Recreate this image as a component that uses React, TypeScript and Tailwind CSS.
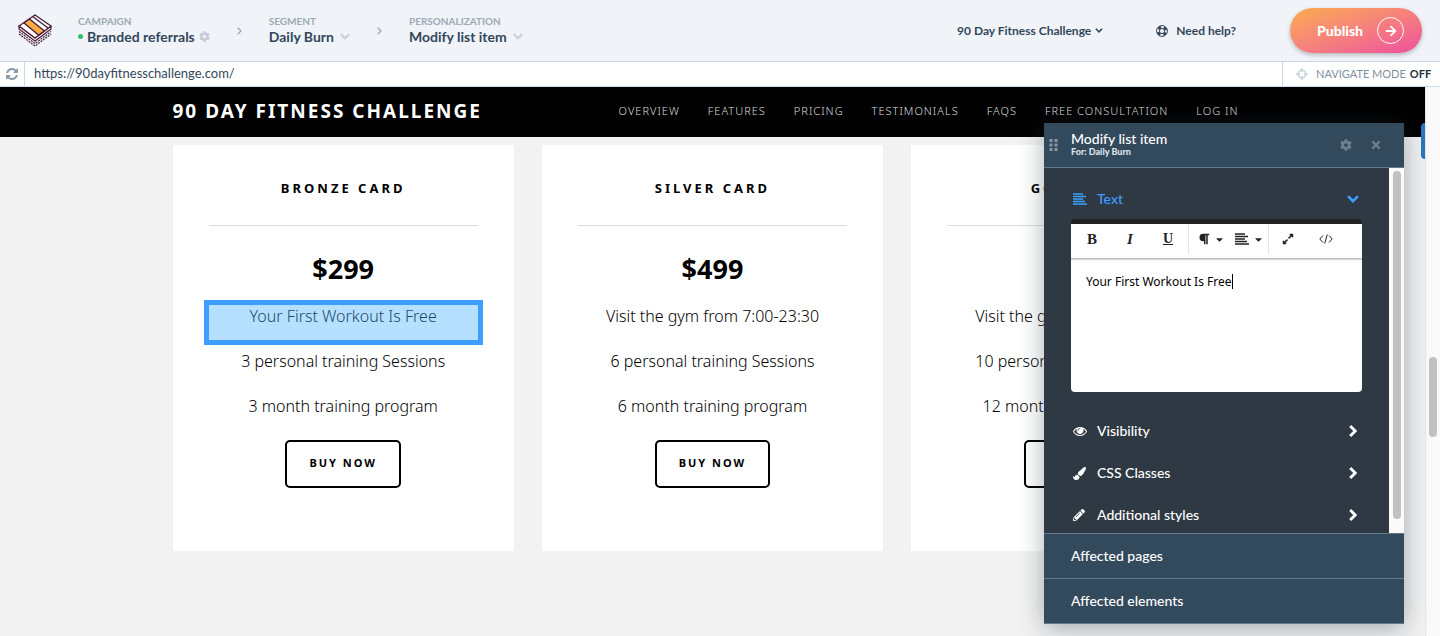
import { FaArrowRight, FaCaretDown, FaCog, FaExpandAlt, FaParagraph, FaPaintBrush, FaPencilAlt, FaTimes } from "react-icons/fa";
import { useState, type ReactNode } from "react";

interface Plan {
  name: string;
  price: string;
  features: string[];
}

const NAV_LINKS = ["Overview", "Features", "Pricing", "Testimonials", "FAQs", "Free consultation", "Log in"];

const PLANS: Plan[] = [
  { name: "Bronze card", price: "$299", features: ["3 personal training Sessions", "3 month training program"] },
  {
    name: "Silver card",
    price: "$499",
    features: ["Visit the gym from 7:00-23:30", "6 personal training Sessions", "6 month training program"],
  },
  {
    name: "Gold card",
    price: "$699",
    features: ["Visit the gym from 7:00-23:30", "10 personal training Sessions", "12 month training program"],
  },
];

function Logo() {
  return (
    <svg viewBox="0 0 34 34" className="size-[34px]" fill="none" stroke="#4a1f3a" strokeLinejoin="round">
      <path d="M1 20 17 32 33 20" strokeWidth="1.2" strokeDasharray="2 1" />
      <path d="M1 17.500 17 29.500 33 17.500" strokeWidth="1.2" strokeDasharray="2 1" />
      <path d="M1 12v3l16 12 16-12v-3L17 24z" fill="#fff" strokeWidth="1.2" />
      <path d="M17 1 33 12 17 24 1 12z" fill="#fff" strokeWidth="1.4" />
      <path d="M15 2.800 30 14" strokeWidth="1.4" />
      <path d="M11.500 5 26.500 17 20.500 21 6 9z" fill="#fbab3f" strokeWidth="1.4" />
    </svg>
  );
}

function RefreshIcon() {
  return (
    <svg viewBox="0 128 1536 1536" className="size-3" fill="currentColor">
      <path d="M1511 1056q0 5-1 7-64 268-268 434.500t-478 166.500q-146 0-282.500-55t-243.500-157l-129 129q-19 19-45 19t-45-19-19-45v-448q0-26 19-45t45-19h448q26 0 45 19t19 45-19 45l-137 137q71 66 161 102t187 36q134 0 250-65t186-179q11-17 53-117 8-23 30-23h192q13 0 22.500 9.500t9.500 22.500zm25-800v448q0 26-19 45t-45 19h-448q-26 0-45-19t-19-45 19-45l138-138q-148-137-349-137-134 0-250 65t-186 179q-11 17-53 117-8 23-30 23h-199q-13 0-22.500-9.500t-9.500-22.500v-7q65-268 270-434.500t480-166.500q146 0 284 55.500t245 156.500l130-129q19-19 45-19t45 19 19 45z" />
    </svg>
  );
}

function EyeIcon() {
  return (
    <svg viewBox="0 0 1792 1792" className="size-[14px]" fill="currentColor">
      <path d="M1664 960q-152-236-381-353 61 104 61 225 0 185-131.500 316.500t-316.500 131.500-316.500-131.500-131.500-316.500q0-121 61-225-229 117-381 353 133 205 333.500 326.500t434.500 121.500 434.500-121.500 333.500-326.500zm-720-384q0-20-14-34t-34-14q-125 0-214.500 89.500t-89.500 214.500q0 20 14 34t34 14 34-14 14-34q0-86 61-147t147-61q20 0 34-14t14-34zm848 384q0 34-20 69-140 230-376.500 368.500t-499.500 138.500-499.500-139-376.500-368q-20-35-20-69t20-69q140-229 376.500-368t499.500-139 499.500 139 376.500 368q20 35 20 69z" />
    </svg>
  );
}

function LifeRingIcon() {
  return (
    <svg viewBox="0 0 12 12" className="size-3" fill="none" stroke="#33475b">
      <circle cx="6" cy="6" r="5.400" />
      <circle cx="6" cy="6" r="2.600" />
      <circle cx="6" cy="6" r="4" strokeWidth="2.800" strokeDasharray="3.142 3.142" strokeDashoffset="-1.571" />
    </svg>
  );
}

function TargetIcon() {
  return (
    <svg viewBox="0 0 12 12" className="size-3" fill="none" stroke="#c3d3de" strokeWidth="1.500">
      <circle cx="6" cy="6" r="3.700" />
      <path d="M6 0v4M6 8v4M0 6h4M8 6h4" />
    </svg>
  );
}

function LinesIcon() {
  return (
    <svg viewBox="0 0 14 12" className="h-3 w-[14px]" stroke="currentColor" strokeWidth="1.600">
      <path d="M0 1h10M0 3.500h13M0 6h10M0 8.500h12M0 11h14" />
    </svg>
  );
}

function CodeIcon() {
  return (
    <svg viewBox="0 0 14 10" className="h-[10px] w-[14px]" fill="none" stroke="currentColor">
      <path d="M4 1.500.8 5 4 8.500M10 1.500 13.200 5 10 8.500M8.300 0.500 5.700 9.500" />
    </svg>
  );
}

function ChevronDown({ className }: { className?: string }) {
  return (
    <svg viewBox="0 0 12 8" className={className} fill="none" stroke="currentColor" strokeWidth="2.600">
      <path d="M1 1.200 6 6.200 11 1.200" />
    </svg>
  );
}

function ChevronRight({ className }: { className?: string }) {
  return (
    <svg viewBox="0 0 8 12" className={className} fill="none" stroke="currentColor" strokeWidth="2.800">
      <path d="M1.200 1 6.200 6 1.200 11" />
    </svg>
  );
}

function CrumbArrow() {
  return (
    <svg viewBox="0 0 5 8" className="mx-[27px] h-2 w-[5px]" fill="none" stroke="#9daab6" strokeWidth="1.300">
      <path d="M.7.700 4 4 .7 7.300" />
    </svg>
  );
}

function Crumb({ label, children }: { label: string; children: ReactNode }) {
  return (
    <div>
      <div className="text-[10px] leading-3 font-bold text-[#9daab6] uppercase">{label}</div>
      <button className="flex items-center gap-1 text-sm leading-5 font-bold text-[#33475b]">{children}</button>
    </div>
  );
}

function PlanCard({ plan, highlight }: { plan: Plan; highlight?: string }) {
  return (
    <article className="h-[406px] bg-white px-9 text-center text-black">
      <h2 className="border-b border-[#ddd] pt-[33px] pb-[27px] text-[13px] leading-5 font-bold tracking-[3px] uppercase">
        {plan.name}
      </h2>
      <p className="pt-[27px] text-[27px] leading-8 font-bold">{plan.price}</p>
      <ul className="mt-[15px] text-base leading-[33px] font-light">
        {highlight && (
          <li className="-mx-[5px] h-[45px] border-[5px] border-[#3d9eff] bg-[#b5e0ff] leading-[23px] text-[#21486b]">
            {highlight}
          </li>
        )}
        {plan.features.map((feature) => (
          <li key={feature} className="h-[45px]">
            {feature}
          </li>
        ))}
      </ul>
      <button className="mt-[5px] h-12 rounded-[5px] border-2 border-black px-[22px] pb-[2px] text-[11px] font-bold tracking-[2px] uppercase">
        Buy now
      </button>
    </article>
  );
}

function Section({ icon, title }: { icon: ReactNode; title: string }) {
  return (
    <button className="flex w-full items-center text-sm leading-5 font-medium text-white">
      <span className="flex w-[26px] pl-[2px]">{icon}</span>
      {title}
      <ChevronRight className="mr-[5px] ml-auto h-3 w-2" />
    </button>
  );
}

function ToolbarButton({ label, children }: { label: string; children: ReactNode }) {
  return (
    <button aria-label={label} className="flex h-[30px] w-[38px] items-center justify-center">
      {children}
    </button>
  );
}

function EditorPanel({ text, onTextChange }: { text: string; onTextChange: (value: string) => void }) {
  return (
    <aside className="absolute top-9 right-9 w-[360px] bg-[#33495c] font-[Lato,sans-serif] text-white shadow-[0_4px_24px_rgba(40,60,70,0.4)]">
      <header className="flex h-[45px] items-center border-b border-[#64798a] pr-[22px] pl-[5px]">
        <svg viewBox="0 0 8 12" className="mr-[13px] h-3 w-[9px]" fill="#8a98a4">
          <path d="M0 0h3v3H0zM5 0h3v3H5zM0 4.500h3v3H0zM5 4.500h3v3H5zM0 9h3v3H0zM5 9h3v3H5z" />
        </svg>
        <div className="flex-1 pb-[2px]">
          <h3 className="text-sm leading-4 font-medium">Modify list item</h3>
          <p className="text-[9px] leading-[10px] font-black text-[#dbe4ec]">For: Daily Burn</p>
        </div>
        <button aria-label="Settings" className="mr-[18px] text-[#6f808d]">
          <FaCog size={12} />
        </button>
        <button aria-label="Close" className="text-[#6f808d]">
          <FaTimes size={12} />
        </button>
      </header>

      <div className="flex h-[365px] bg-[#2f3943]">
        <div className="flex-1 overflow-hidden pt-[21px] pr-[27px] pl-[27px]">
          <button className="flex w-full items-center text-sm leading-5 font-medium text-[#3d9eff]">
            <span className="flex w-[26px] pl-[2px]">
              <LinesIcon />
            </span>
            Text
            <ChevronDown className="mr-[3px] ml-auto h-2 w-3" />
          </button>
          <div className="mt-[10px] rounded-sm border-t-[5px] border-[#222] bg-white text-[#222]">
            <div className="flex h-[35px] items-start border-b border-[#bbb] pl-[2px] shadow-[0_1px_1px_rgba(0,0,0,0.15)]">
              <ToolbarButton label="Bold">
                <span className="font-['Liberation_Serif',serif] text-[15px] font-bold">B</span>
              </ToolbarButton>
              <ToolbarButton label="Italic">
                <span className="font-['Liberation_Serif',serif] text-[15px] font-bold italic">I</span>
              </ToolbarButton>
              <ToolbarButton label="Underline">
                <span className="font-['Liberation_Serif',serif] text-sm font-bold underline">U</span>
              </ToolbarButton>
              <div className="ml-[1px] flex border-x border-[#e5e5e5] pl-[3px]">
                <ToolbarButton label="Paragraph format">
                  <FaParagraph size={12} className="mr-1" />
                  <FaCaretDown size={11} />
                </ToolbarButton>
                <ToolbarButton label="Align">
                  <span className="mr-1">
                    <LinesIcon />
                  </span>
                  <FaCaretDown size={11} />
                </ToolbarButton>
              </div>
              <ToolbarButton label="Full screen">
                <FaExpandAlt size={12} />
              </ToolbarButton>
              <ToolbarButton label="Code view">
                <CodeIcon />
              </ToolbarButton>
            </div>
            <div className="flex h-[133px] items-start px-[15px] py-[13px]">
              <textarea
                aria-label="Text"
                rows={1}
                value={text}
                onChange={(e) => onTextChange(e.target.value)}
                className="block field-sizing-content max-w-full resize-none overflow-hidden font-['Noto_Sans',sans-serif] text-xs leading-5 text-black caret-transparent outline-none"
              />
              <span className="mt-[2px] h-[15px] w-px bg-black" />
            </div>
          </div>
          <div className="mt-[29px] space-y-[22px]">
            <Section icon={<EyeIcon />} title="Visibility" />
            <Section icon={<FaPaintBrush size={13} />} title="CSS Classes" />
            <Section icon={<FaPencilAlt size={12} />} title="Additional styles" />
          </div>
        </div>
        <div className="w-[15px] bg-[#fafafa] pt-[3px] pl-1">
          <div className="h-[348px] w-2 rounded-full bg-[#c1c1c1]" />
        </div>
      </div>

      <button className="block h-[46px] w-full border-y border-[#64798a] pl-[27px] text-left text-sm font-medium">
        Affected pages
      </button>
      <button className="block h-[45px] w-full border-b border-[#64798a] pl-[27px] text-left text-sm font-medium">
        Affected elements
      </button>
    </aside>
  );
}

export default function App() {
  const [text, setText] = useState("Your First Workout Is Free");

  return (
    <div className="flex h-screen flex-col overflow-hidden bg-[#f2f2f2] font-[Lato,sans-serif]">
      {/* Top bar */}
      <header className="flex h-[62px] shrink-0 items-center border-b border-[#c9d8e2] bg-[#f0f3f8] px-[18px]">
        <Logo />
        <nav className="ml-[26px] flex items-center">
          <Crumb label="Campaign">
            <span className="size-[5px] rounded-full bg-[#2fc36d]" />
            Branded referrals
            <FaCog size={11} className="text-[#c5ccd4]" />
          </Crumb>
          <CrumbArrow />
          <Crumb label="Segment">
            Daily Burn
            <ChevronDown className="ml-[2px] h-[7px] w-[10px] text-[#c9cfd6]" />
          </Crumb>
          <CrumbArrow />
          <Crumb label="Personalization">
            Modify list item
            <ChevronDown className="ml-[2px] h-[7px] w-[10px] text-[#c9cfd6]" />
          </Crumb>
        </nav>
        <button className="ml-auto flex items-center gap-1 text-xs font-bold text-[#33475b]">
          90 Day Fitness Challenge
          <ChevronDown className="h-[5px] w-2" />
        </button>
        <a href="#help" className="ml-[53px] flex items-center gap-2 text-xs font-bold text-[#33475b]">
          <LifeRingIcon />
          Need help?
        </a>
        <button className="ml-[54px] flex h-[45px] w-[132px] items-center justify-between rounded-full bg-linear-to-br from-[#fbab48] to-[#ee4c9b] pr-[18px] pl-[27px] text-sm font-black text-white shadow-[0_2px_4px_rgba(0,0,0,0.25)]">
          Publish
          <span className="flex size-[27px] items-center justify-center rounded-full border border-white">
            <FaArrowRight size={12} />
          </span>
        </button>
      </header>

      {/* Address bar */}
      <div className="flex h-[25px] shrink-0 items-stretch border-b border-[#c9d8e2] bg-white">
        <button aria-label="Reload" className="flex w-[25px] items-center justify-center border-r border-[#c9d8e2] text-[#8797a5]">
          <RefreshIcon />
        </button>
        <input
          aria-label="Page address"
          readOnly
          value="https://90dayfitnesschallenge.com/"
          className="min-w-0 flex-1 px-[9px] text-[13px] text-[#33475b] outline-none"
        />
        <button className="flex w-[158px] items-center border-l border-[#c9d8e2] pl-[13px] text-[11px] text-[#7e909e]">
          <TargetIcon />
          <span className="ml-2">NAVIGATE MODE</span>
          <span className="ml-1 font-bold text-[#22303c]">OFF</span>
        </button>
      </div>

      {/* Edited site */}
      <div className="relative flex min-h-0 flex-1 font-['Noto_Sans',sans-serif]">
        <main className="relative flex-1 overflow-hidden">
          <div className="bg-black">
            <div className="mx-auto flex h-[50px] max-w-[1080px] items-center justify-between pr-[14px] pb-[2px] text-white">
              <h1 className="text-[19px] font-bold tracking-[2px]">90 DAY FITNESS CHALLENGE</h1>
              <nav className="flex gap-7 text-[11px] font-light tracking-[1px] text-[#ddd] uppercase">
                {NAV_LINKS.map((link) => (
                  <a key={link} href="#site">
                    {link}
                  </a>
                ))}
              </nav>
            </div>
          </div>
          <div className="mx-auto grid max-w-[1080px] grid-cols-3 gap-7 pt-2">
            {PLANS.map((plan, index) => (
              <PlanCard key={plan.name} plan={plan} highlight={index === 0 ? text : undefined} />
            ))}
          </div>
          <div className="absolute top-9 right-0 h-9 w-1 rounded-l-sm bg-[#2a76c0]" />
        </main>
        <div className="w-[15px] border-l border-[#e7e7e7] bg-[#fafafa] pt-[270px] pl-[3px]">
          <div className="h-20 w-2 rounded-full bg-[#c1c1c1]" />
        </div>
        <EditorPanel text={text} onTextChange={setText} />
      </div>
    </div>
  );
}
